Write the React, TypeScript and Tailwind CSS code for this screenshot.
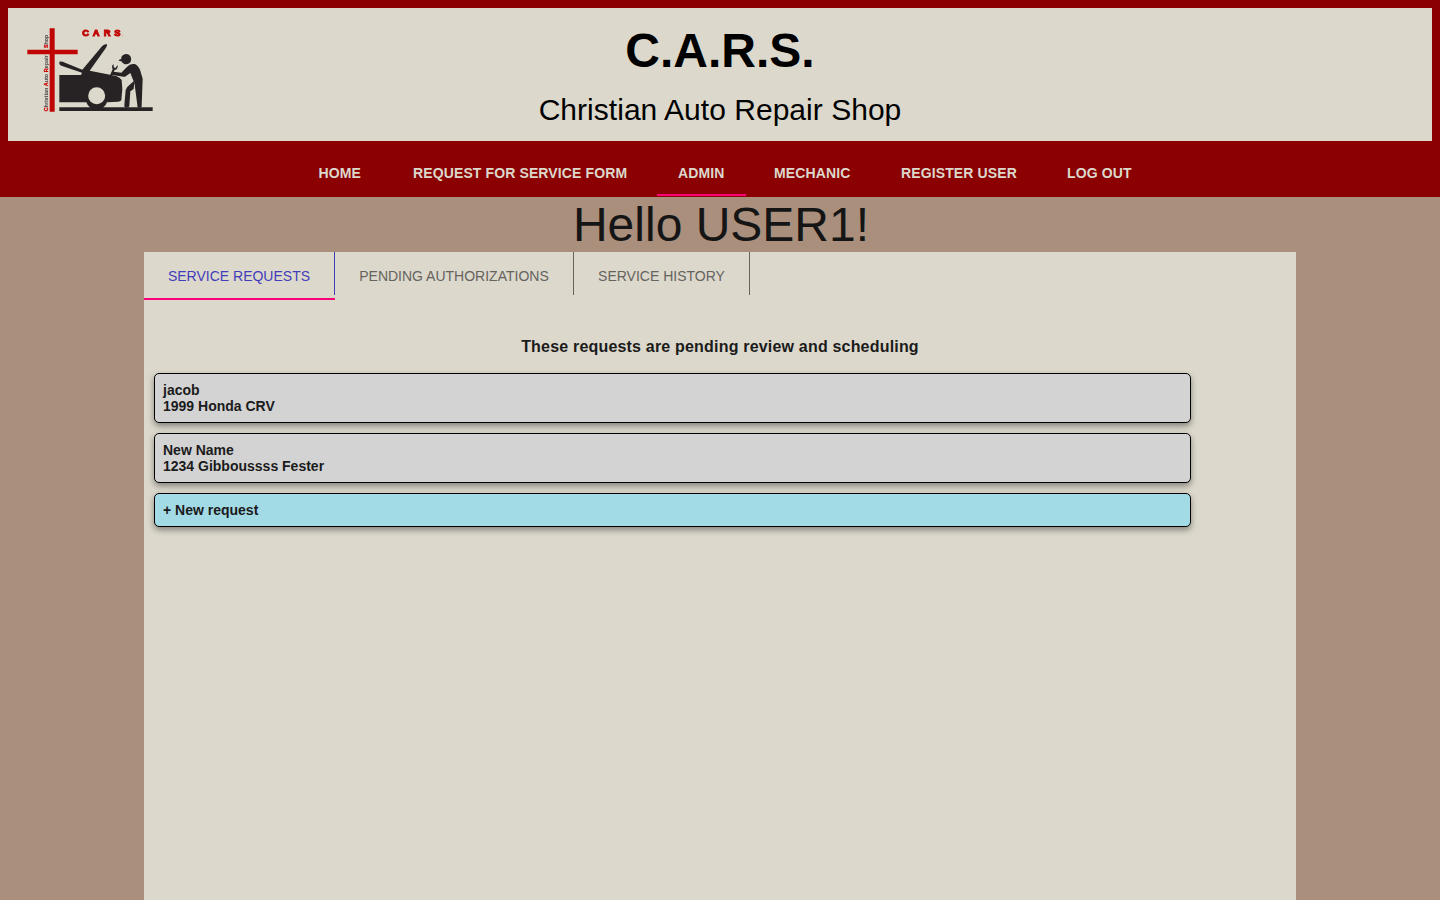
const NAV_ITEMS = [
  { label: 'HOME', width: 'w-[94.5px]' },
  { label: 'REQUEST FOR SERVICE FORM', width: 'w-[265px]' },
  { label: 'ADMIN', width: 'w-[96px]', active: true },
  { label: 'MECHANIC', width: 'w-[127px]' },
  { label: 'REGISTER USER', width: 'w-[166px]' },
  { label: 'LOG OUT', width: 'w-[70px]' },
];

const TABS = [
  { label: 'SERVICE REQUESTS', width: 'w-[191px]', active: true },
  { label: 'PENDING AUTHORIZATIONS', width: 'w-[239px]' },
  { label: 'SERVICE HISTORY', width: 'w-[176px]' },
];

const REQUESTS = [
  { name: 'jacob', car: '1999 Honda CRV' },
  { name: 'New Name', car: '1234 Gibboussss Fester' },
];

function Logo() {
  return (
    <svg viewBox="60 72 420 276" className="h-[92px] w-[140px] blur-[0.4px]" fontFamily="'Liberation Sans', sans-serif">
      <text x="247 257 278 288 311 321 343 365" y="109" fontSize="28" fontWeight="900" fill="#c00606" stroke="#c00606" strokeWidth="3">
        C A R S<tspan fontSize="12" strokeWidth="0">.</tspan>
      </text>
      <path d="M149 85h15v250h-15z M82 149h151v14H82z" fill="#c00505" />
      <g transform="translate(143 334) rotate(-90)" fontSize="18" fontWeight="bold" fill="#4a4545">
        <text x="0" y="0" textLength="168" lengthAdjust="spacingAndGlyphs">
          <tspan fill="#d00808" stroke="#d00808">C</tspan>hristian <tspan fill="#d00808" stroke="#d00808">A</tspan>uto <tspan fill="#d00808" stroke="#d00808">R</tspan>epair
        </text>
        <text x="190" y="0" textLength="40" lengthAdjust="spacingAndGlyphs">
          <tspan fill="#d00808" stroke="#d00808">S</tspan>hop
        </text>
      </g>
      <g fill="#272324">
        <path d="M178 322h280v11H178z" />
        <path d="M178 185Q187 184 195 188L247 209L306 139Q313 131 321 133Q323 136 317 145L269 212L330 224L350 229Q360 232 365 240L367 267L364 301Q361 305 354 305L321 307A33 33 0 0 1 259 307H178V225H243L246 218L184 197Q178 195 178 190z" />
        <path d="M364 171A15.5 15.5 0 1 1 364 184L356 182Q357 178 364 177z" />
        <path d="M329 228L338 208Q334 202 337 196L341 193V202L347 204L352 195Q356 202 350 208L344 210L341 215L364 218L380 202Q390 190 404 192Q414 195 421 212L428 236L425 317Q426 323 418 323Q411 323 412 315L403 247L401 267L391 274L388 317Q388 323 380 323Q372 323 373 315L377 270Q379 261 389 254L401 244L391 219L375 230Q368 231 361 229L336 225L333 230z" />
      </g>
      <circle cx="290" cy="287" r="25.5" fill="#dcd8cc" />
    </svg>
  );
}

export default function App() {
  return (
    <div className="flex h-[900px] w-full flex-col overflow-hidden bg-[#a98f7c] font-['Nimbus_Sans','Helvetica','Liberation_Sans',sans-serif] text-[#1b1b1b]">
      <header className="shrink-0 bg-[#8b0000] px-2 pt-2">
        <div className="grid h-[133px] grid-cols-[160px_1fr_160px] bg-[#dcd8cc]">
          <div className="pt-4 pl-3">
            <Logo />
          </div>
          <div className="flex flex-col items-center whitespace-nowrap text-black">
            <h1 className="pt-[15px] text-[48px] leading-[56px] font-bold">C.A.R.S.</h1>
            <p className="pt-[13px] text-[30px] leading-[36px] tracking-[0.03px]">Christian Auto Repair Shop</p>
          </div>
        </div>
        <nav className="flex h-14 pl-[310.5px] text-sm font-bold text-[#dcd8cc]">
          {NAV_ITEMS.map((item) => (
            <div key={item.label} className={`relative shrink-0 pt-[22px] leading-5 tracking-[0.12px] whitespace-nowrap ${item.width}`}>
              {item.label}
              {item.active && <span className="absolute top-[53px] -left-[21px] h-0.5 w-[89px] bg-[#ff0077]" />}
            </div>
          ))}
        </nav>
      </header>
      <h2 className="h-[55px] shrink-0 pl-0.5 text-center text-[48px] leading-[55px] text-[#151515]">Hello USER1!</h2>
      <main className="mx-auto w-[1152px] grow bg-[#dcd8cc]">
        <div className="flex h-12">
          {TABS.map((tab) => (
            <div key={tab.label} className={`flex h-12 flex-col justify-between ${tab.width}`}>
              <div
                className={`flex h-[43px] justify-center border-r pt-[14px] text-sm leading-5 whitespace-nowrap ${
                  tab.active ? 'border-[#3f3fb5] text-[#433dba]' : 'border-[#666359] text-[#65635e]'
                }`}
              >
                {tab.label}
              </div>
              {tab.active && <div className="h-0.5 bg-[#ff0077]" />}
            </div>
          ))}
        </div>
        <h3 className="pt-[37px] text-center text-base leading-5 font-bold tracking-[0.19px]">These requests are pending review and scheduling</h3>
        <div className="mt-4 ml-[10px] flex w-[1037px] flex-col gap-[10px] text-sm leading-4 font-bold">
          {REQUESTS.map((request) => (
            <div key={request.name} className="rounded-[5px] border border-black bg-[#d3d3d3] p-2 shadow-[0_3px_6px_rgba(0,0,0,0.4)]">
              <p>{request.name}</p>
              <p>{request.car}</p>
            </div>
          ))}
          <div className="rounded-[5px] border border-black bg-[#a2dae6] p-2 shadow-[0_3px_6px_rgba(0,0,0,0.4)]">+ New request</div>
        </div>
      </main>
    </div>
  );
}
